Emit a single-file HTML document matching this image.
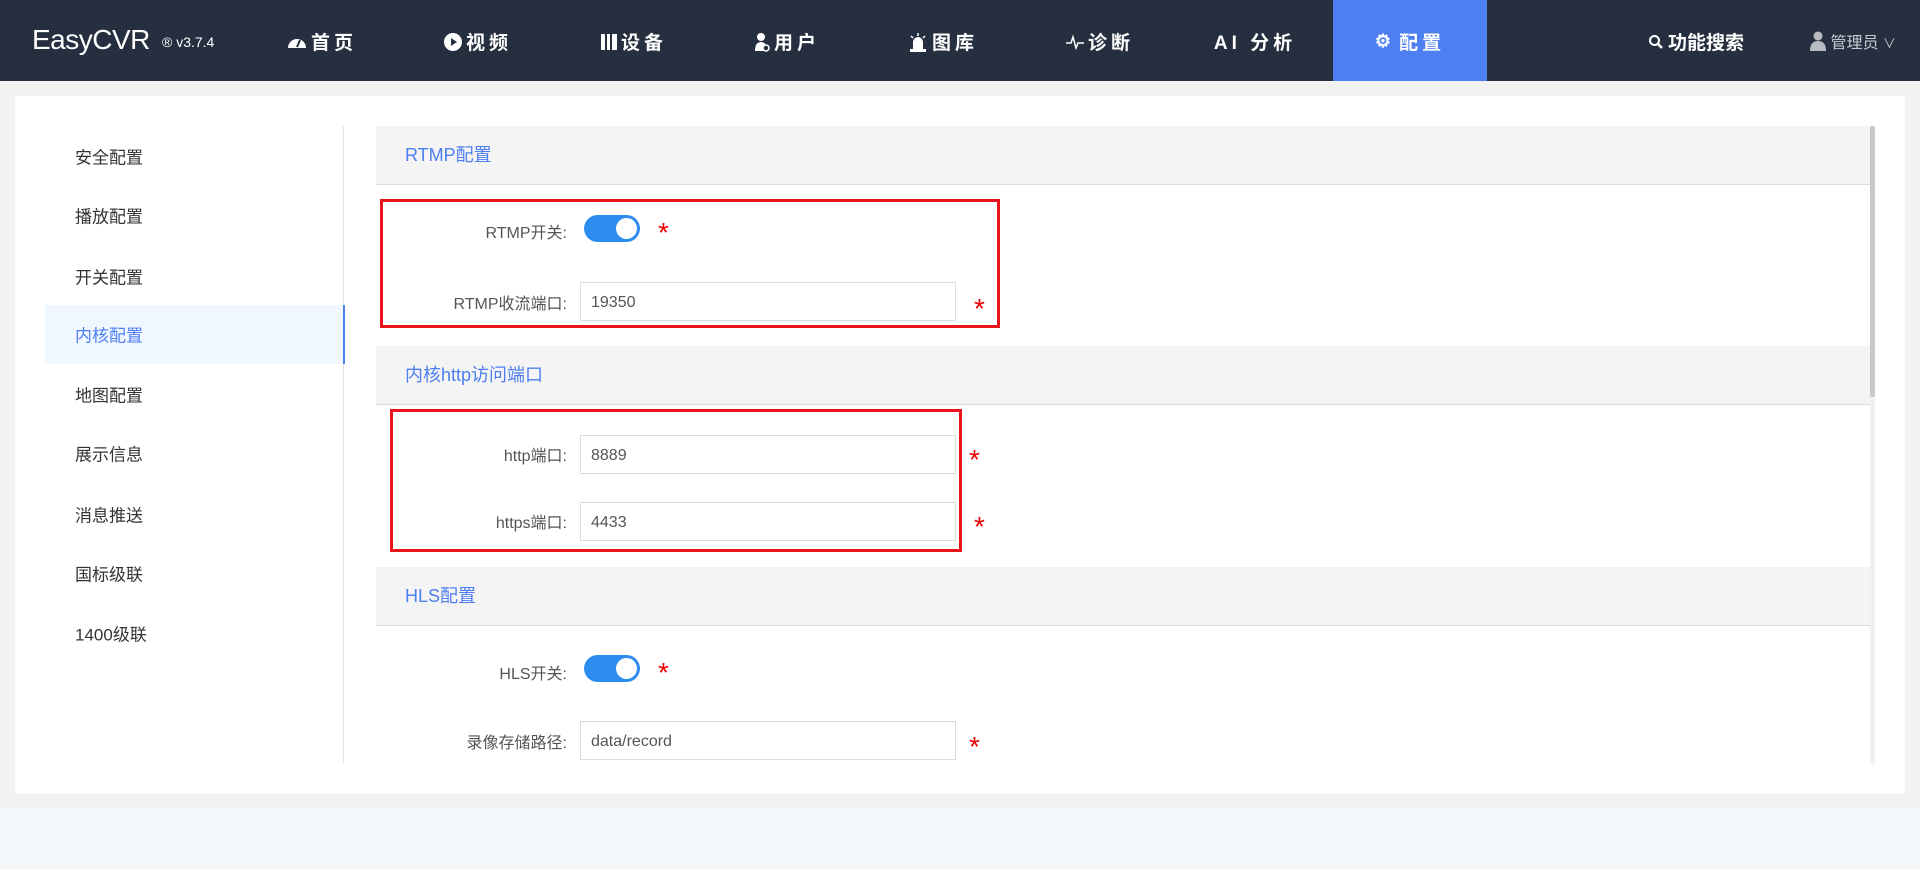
<!DOCTYPE html>
<html><head><meta charset="utf-8"><style>
*{box-sizing:border-box;margin:0;padding:0}
body{width:1920px;height:869px;overflow:hidden;background:#f2f2f2;font-family:"Liberation Sans","Noto Sans CJK SC",sans-serif;position:relative}
.hdr{position:absolute;left:0;top:0;width:1920px;height:81px;background:#252f3f;color:#fff}
.logo{position:absolute;left:32px;top:24px;font-size:28px;color:#fff;letter-spacing:-0.5px}
.ver{position:absolute;left:162px;top:34px;font-size:14px;color:#fff}
.nav{position:absolute;top:28px;font-size:19px;font-weight:bold;color:#fff;transform:translateX(-50%);white-space:nowrap;letter-spacing:4px;display:flex;align-items:center;gap:4px}
.act{position:absolute;left:1333px;top:0;width:154px;height:81px;background:#4e7ff2}
.user{position:absolute;left:1810px;top:29px;font-size:16px;color:#c8ccd2}
.bottom{position:absolute;left:0;top:807px;width:1920px;height:62px;background:#f5f8fb}
.card{position:absolute;left:15px;top:96px;width:1890px;height:698px;background:#fff}
.side{position:absolute;left:45px;top:126px;width:299px;height:638px;border-right:1px solid #e6e6e6}
.si{position:absolute;left:30px;font-size:17px;color:#333;transform:translateY(-50%)}
.sa{position:absolute;left:0;top:179px;width:300px;height:59px;background:#f0f7ff;border-right:2px solid #4e7ff2}
.sec{position:absolute;left:376px;width:1495px;height:59px;background:#f4f4f4;border-bottom:1px solid #dcdcdc;color:#4e7ff2;font-size:18px;padding-left:29px;line-height:58px}
.lbl{position:absolute;font-size:16px;color:#555;text-align:right;transform:translate(-100%,-50%)}
.inp{position:absolute;left:580px;width:376px;height:39px;border:1px solid #dcdcdc;font-size:16px;color:#555;padding-left:10px;line-height:39px}
.tog{position:absolute;left:584px;width:56px;height:27px;border-radius:14px;background:#2d8cf0}
.tog:after{content:"";position:absolute;right:3px;top:3px;width:21px;height:21px;border-radius:50%;background:#fff}
.ast{position:absolute;color:#e00;font-size:28px;transform:translateY(-50%)}
.rb{position:absolute;border:3px solid #e8141c}
.sb{position:absolute;left:1870px;top:126px;width:5px;height:638px;background:#f1f1f1}
.sb div{width:5px;height:271px;background:#c8c8c8;border-radius:2px}
</style></head><body>
<div class="hdr">
<div class="logo">EasyCVR</div><div class="ver">® v3.7.4</div>
<div class="act"></div>
<div class="nav" style="left:322px"><svg width="20" height="16" viewBox="0 0 20 16"><path d="M1 14A9 9 0 1 1 19 14Z" fill="#fff"/><path d="M10 13L13 6" stroke="#252f3f" stroke-width="2"/></svg>首页</div>
<div class="nav" style="left:478px"><svg width="18" height="18" viewBox="0 0 18 18"><circle cx="9" cy="9" r="9" fill="#fff"/><path d="M7 5L13 9L7 13Z" fill="#252f3f"/></svg>视频</div>
<div class="nav" style="left:634px"><svg width="16" height="18" viewBox="0 0 16 18"><rect x="0" y="1" width="16" height="16" fill="#fff"/><rect x="4" y="1" width="2" height="16" fill="#252f3f"/><rect x="9" y="1" width="2" height="16" fill="#252f3f"/></svg>设备</div>
<div class="nav" style="left:787px"><svg width="16" height="20" viewBox="0 0 16 20"><circle cx="7" cy="5" r="4" fill="#fff"/><path d="M1 19Q1 10 7 10Q13 10 13 19Z" fill="#fff"/><circle cx="12" cy="16" r="3" fill="#252f3f" stroke="#fff" stroke-width="1.5"/></svg>用户</div>
<div class="nav" style="left:943px"><svg width="20" height="20" viewBox="0 0 20 20"><path d="M5 18V10A5 5 0 0 1 15 10V18Z" fill="#fff"/><rect x="2" y="17" width="16" height="3" fill="#fff"/><path d="M10 1V4M3 4L5 6M17 4L15 6" stroke="#fff" stroke-width="1.5"/></svg>图库</div>
<div class="nav" style="left:1100px"><svg width="18" height="16" viewBox="0 0 18 16"><path d="M0 9H5L7 3L10 14L12 9H18" stroke="#fff" stroke-width="1.5" fill="none"/></svg>诊断</div>
<div class="nav" style="left:1255px">AI 分析</div>
<div class="nav" style="left:1410px"><span style="font-size:18px">⚙</span>配置</div>
<div class="nav" style="left:1696px;letter-spacing:0"><svg width="16" height="16" viewBox="0 0 16 16"><circle cx="6.5" cy="6.5" r="4.5" stroke="#fff" stroke-width="2" fill="none"/><path d="M10 10L14 14" stroke="#fff" stroke-width="2.5"/></svg>功能搜索</div>
<div class="user"><svg width="16" height="20" viewBox="0 0 16 20" style="vertical-align:-3px"><circle cx="8" cy="5" r="4.5" fill="#b8bcc2"/><path d="M0 20Q0 10 8 10Q16 10 16 20Z" fill="#b8bcc2"/></svg> 管理员 <span style="font-size:13px">∨</span></div>
</div>
<div class="bottom"></div>
<div class="card"></div>
<div class="side">
<div class="sa"></div>
<div class="si" style="top:30px">安全配置</div>
<div class="si" style="top:89px">播放配置</div>
<div class="si" style="top:150px">开关配置</div>
<div class="si" style="top:208px;color:#4e7ff2">内核配置</div>
<div class="si" style="top:268px">地图配置</div>
<div class="si" style="top:327px">展示信息</div>
<div class="si" style="top:388px">消息推送</div>
<div class="si" style="top:447px">国标级联</div>
<div class="si" style="top:507px">1400级联</div>
</div>
<div class="sec" style="top:126px">RTMP配置</div>
<div class="sec" style="top:346px">内核http访问端口</div>
<div class="sec" style="top:567px">HLS配置</div>
<div class="lbl" style="left:567px;top:231px">RTMP开关:</div>
<div class="tog" style="top:215px"></div><div class="ast" style="left:658px;top:233px">*</div>
<div class="lbl" style="left:567px;top:302px">RTMP收流端口:</div>
<div class="inp" style="top:282px">19350</div><div class="ast" style="left:974px;top:309px">*</div>
<div class="rb" style="left:380px;top:199px;width:620px;height:129px"></div>
<div class="lbl" style="left:567px;top:454px">http端口:</div>
<div class="inp" style="top:435px">8889</div><div class="ast" style="left:969px;top:460px">*</div>
<div class="lbl" style="left:567px;top:521px">https端口:</div>
<div class="inp" style="top:502px">4433</div><div class="ast" style="left:974px;top:527px">*</div>
<div class="rb" style="left:390px;top:409px;width:572px;height:143px"></div>
<div class="lbl" style="left:567px;top:672px">HLS开关:</div>
<div class="tog" style="top:655px"></div><div class="ast" style="left:658px;top:673px">*</div>
<div class="lbl" style="left:567px;top:741px">录像存储路径:</div>
<div class="inp" style="top:721px">data/record</div><div class="ast" style="left:969px;top:747px">*</div>
<div style="position:absolute;left:376px;top:764px;width:1500px;height:30px;background:#fff"></div>
<div class="sb"><div></div></div>
</body></html>
